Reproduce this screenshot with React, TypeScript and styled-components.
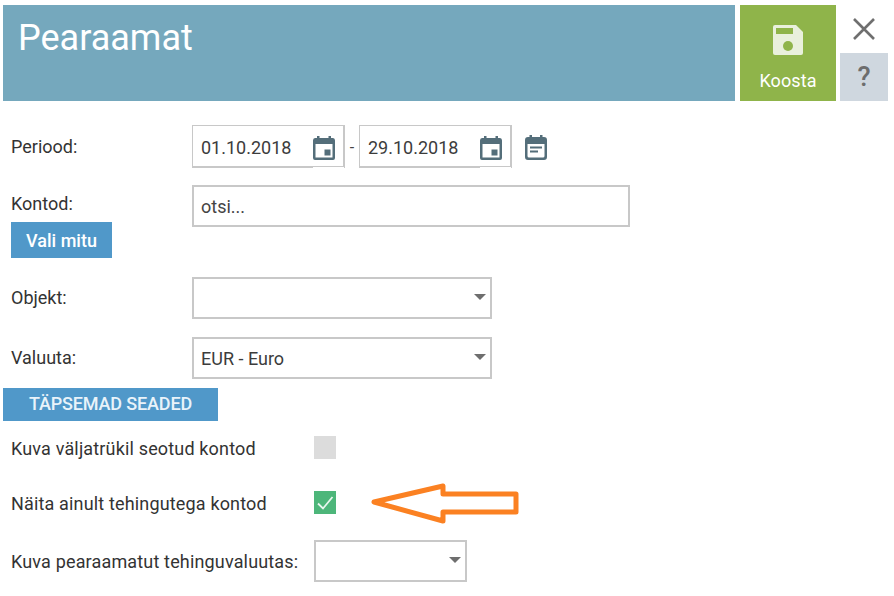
import React from "react";
import styled, { createGlobalStyle } from "styled-components";

const Global = createGlobalStyle`
  html, body { margin: 0; padding: 0; background: #fff; }
  body { font-family: Roboto, "Liberation Sans", sans-serif; color: #333; }
`;

const Page = styled.div`
  position: relative;
  width: 894px;
  height: 596px;
  overflow: hidden;
  padding: 5px 0 0 3px;
  box-sizing: border-box;
`;
const Header = styled.header`
  display: flex;
  height: 96px;
`;
const TitleBar = styled.div`
  width: 732px;
  background: #75a8bd;
  color: #fff;
  font-size: 36px;
  line-height: 38px;
  padding: 14px 0 0 15px;
  box-sizing: border-box;
`;
const SaveButton = styled.div`
  width: 96px;
  margin-left: 5px;
  background: #8fb44a;
  color: #fff;
  font-size: 18px;
  display: flex;
  flex-direction: column;
  align-items: center;
  padding-top: 20px;
  box-sizing: border-box;
`;
const SaveLabel = styled.span`
  margin-top: 16px;
  line-height: 20px;
  letter-spacing: 0.1px;
`;
const SideButtons = styled.div`
  width: 48px;
  margin-left: 4px;
  display: flex;
  flex-direction: column;
`;
const CloseBox = styled.div`
  height: 48px;
  display: flex;
  align-items: center;
  justify-content: center;
`;
const HelpBox = styled.div`
  height: 48px;
  background: #cfd7df;
  color: #6d6d6d;
  font-size: 27px;
  font-weight: 500;
  display: flex;
  align-items: center;
  justify-content: center;
`;
const Form = styled.div`
  display: flex;
  flex-direction: column;
  padding-top: 24px;
`;
const Row = styled.div<{ $top?: number; $h: number }>`
  display: flex;
  align-items: center;
  height: ${(p) => p.$h}px;
  margin-top: ${(p) => p.$top ?? 0}px;
  padding-left: 8px;
`;
const Label = styled.label`
  width: 181px;
  flex: none;
  font-size: 18px;
  line-height: 20px;
  color: #333;
`;
const AccountRow = styled.div`
  display: flex;
  align-items: flex-start;
  margin-top: 17px;
  padding-left: 8px;
  height: 73px;
`;
const AccountLeft = styled.div`
  width: 181px;
  flex: none;
  padding-top: 9px;
  display: flex;
  flex-direction: column;
  align-items: flex-start;
`;
const BlueButton = styled.div`
  background: #5098c9;
  color: #fff;
  font-size: 18px;
  font-weight: 500;
  height: 36px;
  line-height: 37px;
  width: 101px;
  text-align: center;
  margin-top: 8px;
`;
const AdvancedButton = styled.div`
  background: #5098c9;
  color: #e9f3fa;
  font-size: 18px;
  font-weight: 500;
  letter-spacing: -0.15px;
  width: 215px;
  height: 33px;
  line-height: 32px;
  text-align: center;
  margin-top: 9px;
`;
const DateField = styled.div`
  position: relative;
  width: 153px;
  height: 43px;
  box-sizing: border-box;
  border: 1px solid #c8c8c8;
  border-right-width: 2px;
  border-bottom-width: 2px;
  display: flex;
  align-items: center;
  padding: 2px 0 0 8px;
  font-size: 18px;
  color: #3c3c3c;
`;
const DateIcon = styled.span`
  position: absolute;
  right: 7px;
  top: 9px;
  display: flex;
`;
const Notch = styled.span`
  position: absolute;
  right: -1px;
  bottom: -2px;
  width: 31px;
  height: 1px;
  background: #fff;
`;
const Dash = styled.span`
  width: 14px;
  text-align: center;
  font-size: 16px;
  color: #444;
  padding-top: 2px;
`;
const PlainIcon = styled.span`
  display: flex;
  margin-left: 13px;
  margin-top: 1px;
`;
const SearchField = styled.div`
  width: 438px;
  height: 42px;
  box-sizing: border-box;
  border: 2px solid #c8c8c8;
  display: flex;
  align-items: center;
  padding-left: 7px;
  font-size: 18px;
  color: #444;
`;
const Select = styled.div<{ $w: number }>`
  position: relative;
  width: ${(p) => p.$w}px;
  height: 42px;
  box-sizing: border-box;
  border: 2px solid #c8c8c8;
  display: flex;
  align-items: center;
  padding-left: 7px;
  font-size: 18px;
  color: #3c3c3c;
  &::after {
    content: "";
    position: absolute;
    right: 4px;
    top: 15px;
    border-left: 6.5px solid transparent;
    border-right: 6.5px solid transparent;
    border-top: 6.5px solid #6e6e6e;
  }
`;
const CheckLabel = styled.label<{ $nudge: number }>`
  width: 303px;
  flex: none;
  font-size: 18px;
  line-height: 20px;
  letter-spacing: 0.16px;
  color: #333;
  padding-top: ${(p) => p.$nudge}px;
`;
const Check = styled.div<{ $on?: boolean }>`
  width: 22px;
  height: 23px;
  background: ${(p) => (p.$on ? "#4db67a" : "#dcdcdc")};
  display: flex;
  align-items: center;
  justify-content: center;
`;
const Arrow = styled.svg`
  position: absolute;
  left: 365px;
  top: 478px;
`;

const CalendarDate = () => (
  <svg width="24" height="26" viewBox="0 0 24 26">
    <path fill="#546e7a" d="M5 1h2.500v2h9V1H19v2h2a2.500 2.500 0 0 1 2 2.500V23a2 2 0 0 1-2 2H3a2 2 0 0 1-2-2V5.500A2.500 2.500 0 0 1 3 3h2zM3.500 9v13.500h17V9z" />
    <rect fill="#546e7a" x="12.500" y="14.500" width="6" height="6" />
  </svg>
);
const CalendarList = () => (
  <svg width="22" height="25" viewBox="0 0 22 25">
    <path fill="#546e7a" d="M4.500 0H7v2h8V0h2.500v2H19a3 3 0 0 1 3 3v17a3 3 0 0 1-3 3H3a3 3 0 0 1-3-3V5a3 3 0 0 1 3-3h1.500zM2.500 9v12a1.500 1.500 0 0 0 1.500 1.500h14a1.500 1.500 0 0 0 1.500-1.500V9z" />
    <rect fill="#546e7a" x="5" y="11.500" width="12" height="2" />
    <rect fill="#546e7a" x="5" y="15.500" width="8" height="2" />
  </svg>
);

export default function App() {
  return (
    <Page>
      <Global />
      <Header>
        <TitleBar>Pearaamat</TitleBar>
        <SaveButton>
          <svg width="30" height="30" viewBox="0 0 30 30">
            <path fill="#e9f0dc" d="M2 0h21l7 7v21a2 2 0 0 1-2 2H2a2 2 0 0 1-2-2V2a2 2 0 0 1 2-2z" />
            <rect fill="#8fb44a" x="3" y="3" width="17" height="6" />
            <circle fill="#8fb44a" cx="15" cy="21" r="5" />
          </svg>
          <SaveLabel>Koosta</SaveLabel>
        </SaveButton>
        <SideButtons>
          <CloseBox>
            <svg width="22" height="22" viewBox="0 0 22 22">
              <path stroke="#6f6f6f" strokeWidth="2.600" d="M1 1l20 20M21 1L1 21" />
            </svg>
          </CloseBox>
          <HelpBox>?</HelpBox>
        </SideButtons>
      </Header>
      <Form>
        <Row $h={43}>
          <Label>Periood:</Label>
          <DateField>
            01.10.2018
            <DateIcon><CalendarDate /></DateIcon>
            <Notch />
          </DateField>
          <Dash>-</Dash>
          <DateField>
            29.10.2018
            <DateIcon><CalendarDate /></DateIcon>
            <Notch />
          </DateField>
          <PlainIcon><CalendarList /></PlainIcon>
        </Row>
        <AccountRow>
          <AccountLeft>
            <Label>Kontod:</Label>
            <BlueButton>Vali mitu</BlueButton>
          </AccountLeft>
          <SearchField>otsi...</SearchField>
        </AccountRow>
        <Row $h={42} $top={19}>
          <Label>Objekt:</Label>
          <Select $w={300} />
        </Row>
        <Row $h={42} $top={18}>
          <Label>Valuuta:</Label>
          <Select $w={300}>EUR - Euro</Select>
        </Row>
        <AdvancedButton>TÄPSEMAD SEADED</AdvancedButton>
        <Row $h={23} $top={15}>
          <CheckLabel $nudge={3}>Kuva väljatrükil seotud kontod</CheckLabel>
          <Check />
        </Row>
        <Row $h={23} $top={32}>
          <CheckLabel $nudge={3}>Näita ainult tehingutega kontod</CheckLabel>
          <Check $on>
            <svg width="18" height="16" viewBox="0 0 18 16">
              <path fill="none" stroke="#e8f6ee" strokeWidth="1.800" d="M2 8.500l5 5L16.500 2" />
            </svg>
          </Check>
        </Row>
        <Row $h={42} $top={26}>
          <CheckLabel $nudge={1}>Kuva pearaamatut tehinguvaluutas:</CheckLabel>
          <Select $w={153} />
        </Row>
      </Form>
      <Arrow width="160" height="50" viewBox="0 0 160 50">
        <path
          fill="none"
          stroke="#fb8122"
          strokeWidth="5"
          strokeLinejoin="round"
          d="M9 24L78 8v8h73v18H78v9z"
        />
      </Arrow>
    </Page>
  );
}
